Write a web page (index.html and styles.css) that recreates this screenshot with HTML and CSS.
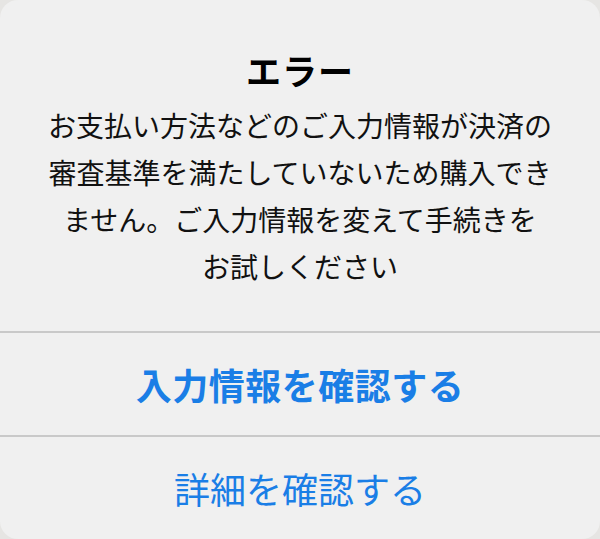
FILE: index.html
```html
<!DOCTYPE html>
<html lang="ja">
<head>
<meta charset="utf-8">
<link rel="stylesheet" href="styles.css">
</head>
<body>
<div class="alert">
  <div class="message">
    <h1 class="title">エラー</h1>
    <p class="body">お支払い方法などのご入力情報が決済の<br>審査基準を満たしていないため購入でき<br>ません。ご入力情報を変えて手続きを<br>お試しください</p>
  </div>
  <div class="sep"></div>
  <div class="button primary">入力情報を確認する</div>
  <div class="sep"></div>
  <div class="button">詳細を確認する</div>
</div>
</body>
</html>
```

FILE: styles.css
```css
html, body {
  margin: 0;
  padding: 0;
  background: #e6e5e3;
}
body {
  font-family: "Noto Sans CJK JP", "Noto Sans", sans-serif;
  width: 600px;
  height: 539px;
  overflow: hidden;
}
.alert {
  width: 600px;
  height: 539px;
  background: #f0f0f0;
  border-radius: 18px;
  display: flex;
  flex-direction: column;
}
.message {
  height: 331px;
  box-sizing: border-box;
  padding-top: 48px;
  text-align: center;
}
.title {
  margin: 0;
  font-size: 35px;
  line-height: 44px;
  font-weight: 700;
  color: #000;
  letter-spacing: 1px;
}
.body {
  margin: 10px 0 0;
  font-size: 28px;
  line-height: 47px;
  color: #111;
}
.sep {
  height: 2px;
  background: #c9c9c9;
}
.button {
  height: 102px;
  display: flex;
  align-items: center;
  justify-content: center;
  font-size: 36px;
  color: #1a7ee6;
}
.primary {
  font-weight: 700;
  letter-spacing: 0.5px;
}
```
